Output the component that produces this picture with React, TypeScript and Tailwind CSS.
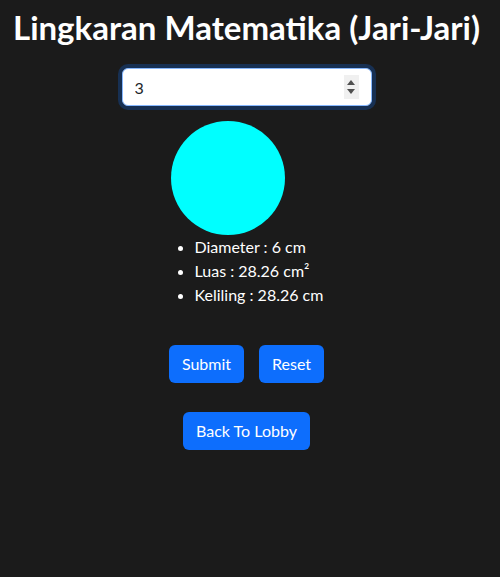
import React, { useState } from "react";

export default function App() {
  const [r, setR] = useState("3");
  const rad = parseFloat(r) || 0;
  return (
    <div className="min-h-[577px] bg-[#1b1b1b] text-white flex flex-col items-center pr-[7px]" style={{ fontFamily: '"Lato", "Open Sans", sans-serif' }}>
      <h1 className="mt-[8px] text-[33px] leading-[38px] font-bold text-center">Lingkaran Matematika (Jari-Jari)</h1>
      <div className="relative mt-[22px]">
        <input
          type="number"
          value={r}
          onChange={(e) => setR(e.target.value)}
          className="w-[250px] h-[38px] rounded-[6px] bg-white text-[#212529] text-[16px] px-[12px] border border-[#86b7fe] outline-none shadow-[0_0_0_4px_rgba(13,110,253,0.25)] [appearance:textfield] [&::-webkit-inner-spin-button]:appearance-none [&::-webkit-outer-spin-button]:appearance-none"
        />
        <div className="absolute right-[13px] top-[7px] w-[15px] h-[24px] bg-[#f0f0f0] flex flex-col items-center justify-center gap-[4px] pointer-events-none">
          <svg width="8" height="5" viewBox="0 0 8 5"><path d="M4 0 L8 5 L0 5 Z" fill="#505050" /></svg>
          <svg width="8" height="5" viewBox="0 0 8 5"><path d="M0 0 L8 0 L4 5 Z" fill="#505050" /></svg>
        </div>
      </div>
      <div className="w-[158px] mt-[15px] ml-[6px]">
        <div className="w-[114px] h-[114px] rounded-full bg-[#00ffff]" />
        <ul className="list-disc pl-[24px] mt-[0px] text-[16px] leading-[24px]">
          <li>Diameter : {rad * 2} cm</li>
          <li>Luas : 28.26 cm²</li>
          <li>Keliling : 28.26 cm</li>
        </ul>
      </div>
      <div className="flex gap-[15px] mt-[38px]">
        <button className="h-[38px] px-[13px] rounded-[6px] bg-[#0d6efd] text-white text-[16px]">Submit</button>
        <button className="h-[38px] px-[13px] rounded-[6px] bg-[#0d6efd] text-white text-[16px]">Reset</button>
      </div>
      <button className="mt-[29px] h-[38px] px-[13px] rounded-[6px] bg-[#0d6efd] text-white text-[16px]">Back To Lobby</button>
    </div>
  );
}
